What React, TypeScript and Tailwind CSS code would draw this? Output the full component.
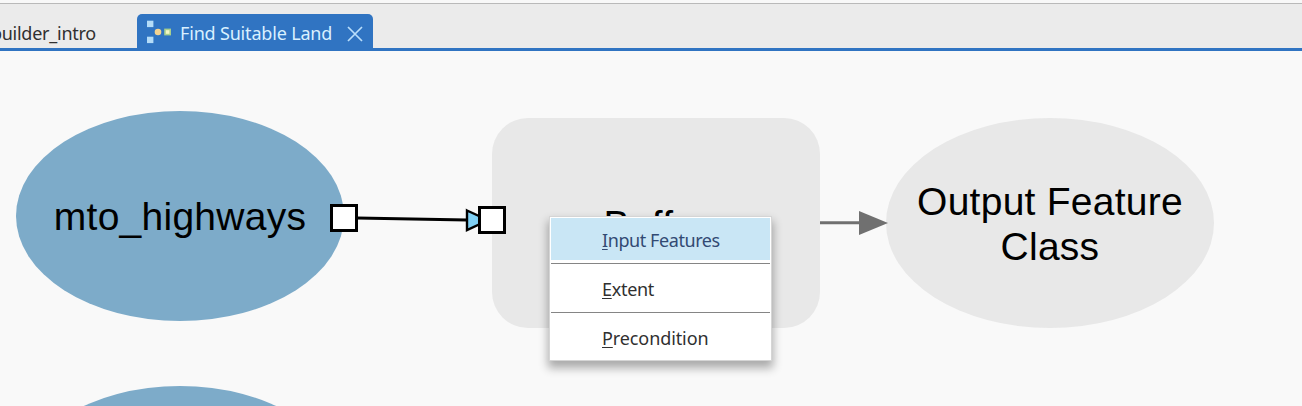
import type { ReactNode } from "react";

function ModelIcon() {
  return (
    <svg width="26" height="24" viewBox="0 0 26 24" className="mt-[2px] shrink-0">
      <rect x="1" y="0.7" width="6.4" height="6.4" fill="#b4dcf8" />
      <rect x="1" y="16.7" width="6.4" height="6.4" fill="#b4dcf8" />
      <circle cx="12" cy="12" r="3.3" fill="#f3d391" />
      <rect x="18.2" y="8.6" width="6.8" height="6.8" fill="#a9cf8d" />
      <rect x="19.8" y="10.2" width="3.6" height="3.6" fill="#f3f7c4" />
    </svg>
  );
}

function TabBar() {
  return (
    <header className="h-[51px] shrink-0 flex flex-col bg-[#ebebeb] border-b-3 border-[#3074c2]">
      <div className="h-1 shrink-0 bg-[#f8f8f8] border-b border-[#b9b9b9]" />
      <div className="flex flex-1 items-end">
        <div className="w-[137px] h-[34px] shrink-0 flex items-center justify-end pr-[41px] overflow-hidden whitespace-nowrap text-[18px] tracking-[-0.25px] text-[#303030]">
          <span className="pt-[5px]">modelbuilder_intro</span>
        </div>
        <div className="w-[236px] h-[34px] flex items-center rounded-t-[5px] bg-[#3074c2] pl-[9px] text-[#d9f0ff]">
          <ModelIcon />
          <span className="ml-2 pt-[5px] w-[154px] whitespace-nowrap text-[18px] tracking-[-0.18px]">Find Suitable Land</span>
          <svg width="16" height="16" viewBox="0 0 16 16" className="ml-[13px] mt-[5px]">
            <path d="M1 1 L15 15 M15 1 L1 15" stroke="#b9defb" strokeWidth="1.7" />
          </svg>
        </div>
      </div>
    </header>
  );
}

function MenuItem({ first, rest, className }: { first: string; rest: string; className: string }) {
  return (
    <div className={"h-[42px] flex items-center pl-[51px] " + className}>
      <span className="pt-[3px]">
        <span className="underline decoration-1 underline-offset-2">{first}</span>
        {rest}
      </span>
    </div>
  );
}

function Separator() {
  return (
    <div className="h-[7px] flex items-center">
      <div className="h-px w-full bg-[#858585]" />
    </div>
  );
}

function ContextMenu() {
  return (
    <div className="absolute left-[549px] top-[165px] w-[223px] h-[145px] bg-white border border-[#d5d5d5] p-px text-[18px] shadow-[0_6px_9px_1px_rgba(0,0,0,0.32)]">
      <MenuItem first="I" rest="nput Features" className="bg-[#c9e6f5] text-[#324a73] tracking-[-0.42px]" />
      <Separator />
      <MenuItem first="E" rest="xtent" className="text-[#303030] tracking-[-0.3px]" />
      <Separator />
      <MenuItem first="P" rest="recondition" className="text-[#303030] tracking-[-0.1px]" />
    </div>
  );
}

function Node({ className, children }: { className: string; children?: ReactNode }) {
  return (
    <div className={"absolute flex items-center justify-center text-center font-['Liberation_Sans',sans-serif] text-[39px] leading-[45.5px] tracking-[0.25px] text-black " + className}>
      {children}
    </div>
  );
}

function Connectors() {
  return (
    <svg width="1302" height="355" viewBox="0 51 1302 355" className="absolute left-0 top-0">
      <path d="M357 218 L467 220" stroke="#000" strokeWidth="3" />
      <path d="M467 210.5 L480 216.5 V224 L467 230 Z" fill="#7fd0f5" stroke="#000" strokeWidth="2.4" />
      <rect x="331.5" y="205.5" width="25" height="25" fill="#fff" stroke="#000" strokeWidth="3" />
      <rect x="479.5" y="207.5" width="25" height="25" fill="#fff" stroke="#000" strokeWidth="3" />
      <path d="M820 222.8 H864" stroke="#707070" strokeWidth="3" />
      <path d="M859 211 L888 223 L859 235 Z" fill="#707070" />
    </svg>
  );
}

export default function App() {
  return (
    <div className="h-[406px] w-[1302px] flex flex-col overflow-hidden bg-[#f9f9f9] font-['Noto_Sans',sans-serif]">
      <TabBar />
      <main className="relative flex-1 overflow-hidden">
        <Node className="left-[16px] top-[60px] w-[328px] h-[210px] rounded-[50%] bg-[#7dabc9]">
          <span className="pt-[2px]">mto_highways</span>
        </Node>
        <Node className="left-[16px] top-[335px] w-[328px] h-[210px] rounded-[50%] bg-[#7dabc9]" />
        <Node className="left-[492px] top-[67px] w-[328px] h-[210px] rounded-[36px] bg-[#e8e8e8] pt-1">
          <span>Buffer</span>
        </Node>
        <Node className="left-[886px] top-[67px] w-[328px] h-[210px] rounded-[50%] bg-[#e8e8e8] pt-[2px]">
          <span>Output Feature<br />Class</span>
        </Node>
        <Connectors />
        <ContextMenu />
      </main>
    </div>
  );
}
